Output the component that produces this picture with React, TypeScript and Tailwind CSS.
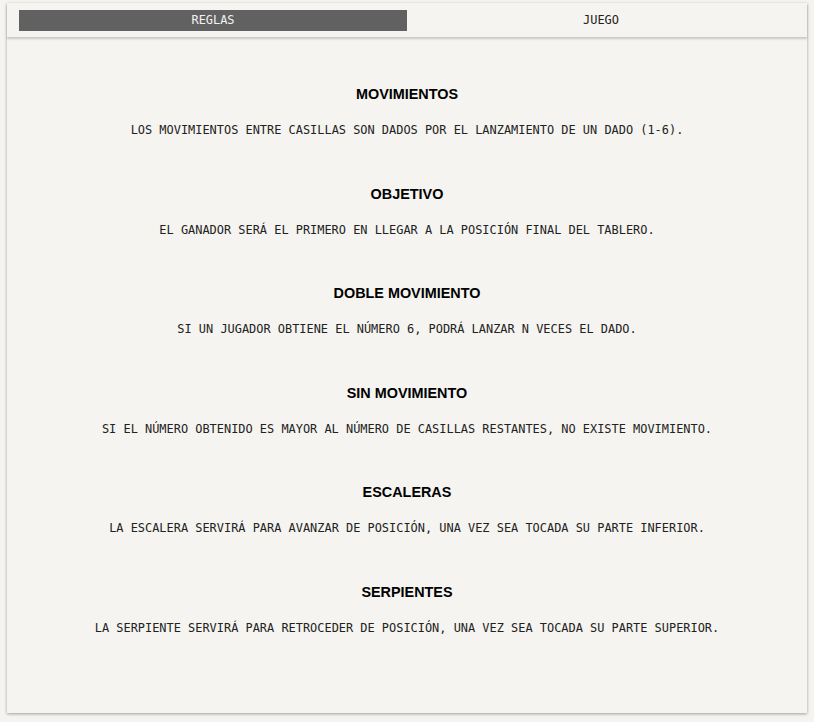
import React, { useState } from 'react';

const rules = [
  {
    title: 'MOVIMIENTOS',
    text: 'LOS MOVIMIENTOS ENTRE CASILLAS SON DADOS POR EL LANZAMIENTO DE UN DADO (1-6).',
  },
  {
    title: 'OBJETIVO',
    text: 'EL GANADOR SERÁ EL PRIMERO EN LLEGAR A LA POSICIÓN FINAL DEL TABLERO.',
  },
  {
    title: 'DOBLE MOVIMIENTO',
    text: 'SI UN JUGADOR OBTIENE EL NÚMERO 6, PODRÁ LANZAR N VECES EL DADO.',
  },
  {
    title: 'SIN MOVIMIENTO',
    text: 'SI EL NÚMERO OBTENIDO ES MAYOR AL NÚMERO DE CASILLAS RESTANTES, NO EXISTE MOVIMIENTO.',
  },
  {
    title: 'ESCALERAS',
    text: 'LA ESCALERA SERVIRÁ PARA AVANZAR DE POSICIÓN, UNA VEZ SEA TOCADA SU PARTE INFERIOR.',
  },
  {
    title: 'SERPIENTES',
    text: 'LA SERPIENTE SERVIRÁ PARA RETROCEDER DE POSICIÓN, UNA VEZ SEA TOCADA SU PARTE SUPERIOR.',
  },
];

export default function App() {
  const [tab, setTab] = useState<'reglas' | 'juego'>('reglas');

  return (
    <div className="min-h-screen bg-[#f5f4f0] pt-[3px] px-[7px] font-['DejaVu_Sans_Mono',monospace]">
      <div className="w-[800px] h-[710px] bg-[#f5f4f0] shadow-[0_1px_3px_rgba(0,0,0,0.35)] flex flex-col">
        {/* tabs */}
        <div className="h-[34px] px-3 pt-[7px] shadow-[0_2px_2px_rgba(0,0,0,0.18)] flex">
          <div
            onClick={() => setTab('reglas')}
            className={`flex-1 h-[21px] flex items-center justify-center text-[11.93px] cursor-pointer ${
              tab === 'reglas' ? 'bg-[#616161] text-[#f2f2f2]' : 'text-[#222]'
            }`}
          >
            REGLAS
          </div>
          <div
            onClick={() => setTab('juego')}
            className={`flex-1 h-[21px] flex items-center justify-center text-[11.93px] cursor-pointer ${
              tab === 'juego' ? 'bg-[#616161] text-[#f2f2f2]' : 'text-[#222]'
            }`}
          >
            JUEGO
          </div>
        </div>

        {/* rules */}
        <div className="pt-[47px] flex flex-col gap-[45.6px]">
          {rules.map((rule) => (
            <div key={rule.title} className="flex flex-col items-center text-center">
              <div className="h-[20px] leading-[20px] text-[14.4px] font-bold text-black font-['Liberation_Sans',Arial,sans-serif]">
                {rule.title}
              </div>
              <div className="mt-[18px] h-[16px] leading-[16px] text-[11.93px] text-[#222]">{rule.text}</div>
            </div>
          ))}
        </div>
      </div>
    </div>
  );
}
